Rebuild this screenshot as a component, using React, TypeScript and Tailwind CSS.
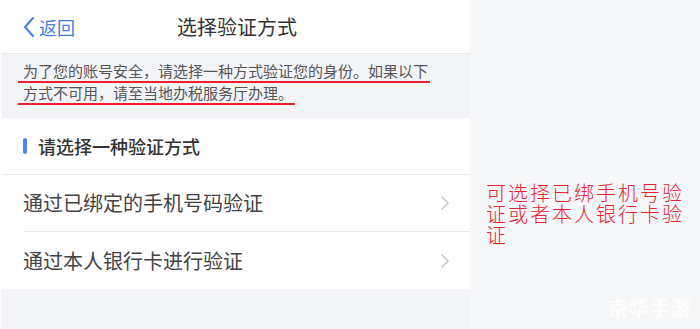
import React from "react";

const SANS = "font-['Noto_Sans_CJK_SC',sans-serif]";

function Chevron() {
  return (
    <svg width="10" height="16" viewBox="0 0 10 16" fill="none">
      <path d="M2 2l6 6-6 6" stroke="#c4c6cc" strokeWidth="1.6" strokeLinecap="round" strokeLinejoin="round" />
    </svg>
  );
}

function App() {
  return (
    <div className={`relative w-[700px] h-[329px] overflow-hidden bg-[#f6f7f9] flex ${SANS}`}>
      {/** phone screen */}
      <div className="w-[470px] h-full border-l-2 border-white bg-[#f3f4f8] flex flex-col">
        {/** nav bar */}
        <div className="h-[54px] shrink-0 bg-white border-b border-[#e6e7eb] flex items-center relative">
          <div className="absolute left-[20px] flex items-center gap-[3px] text-[#3f7fe8]">
            <svg width="14" height="22" viewBox="0 0 14 22" fill="none">
              <path d="M11 2L3 11l8 9" stroke="#3f7fe8" strokeWidth="2" strokeLinecap="round" strokeLinejoin="round" />
            </svg>
            <span className="text-[18px] leading-none">返回</span>
          </div>
          <h1 className="w-full text-center text-[20px] leading-none text-[#333] pl-[2px]">选择验证方式</h1>
        </div>

        {/** tip */}
        <div className="h-[64px] shrink-0 px-[21px] pt-[7px] text-[15px] leading-[22px] text-[#555]">
          <p className="w-fit border-b-2 border-[#e8232f] pr-[2px] -ml-[5px] pl-[5px] leading-[20px]">为了您的账号安全，请选择一种方式验证您的身份。如果以下</p>
          <p className="w-fit border-b-2 border-[#e8232f] pr-[2px] -ml-[5px] pl-[5px] leading-[20px]">方式不可用，请至当地办税服务厅办理。</p>
        </div>

        {/** options */}
        <div className="bg-white shrink-0">
          <div className="h-[57px] flex items-center gap-[11px] pl-[21px] border-b border-[#e8e9ec]">
            <span className="w-[4px] h-[16px] rounded-full bg-[#4f86f5]" />
            <span className="text-[18px] font-medium text-[#333]">请选择一种验证方式</span>
          </div>
          <div className="ml-[21px] h-[57px] flex items-center justify-between pr-[20px] border-b border-[#e8e9ec]">
            <span className="text-[20px] text-[#444]">通过已绑定的手机号码验证</span>
            <Chevron />
          </div>
          <div className="ml-[21px] h-[57px] flex items-center justify-between pr-[20px]">
            <span className="text-[20px] text-[#444]">通过本人银行卡进行验证</span>
            <Chevron />
          </div>
        </div>
      </div>

      {/** annotation */}
      <div className="flex-1 pl-[16px] pt-[182px]">
        <p className="w-[210px] text-[20px] leading-[21px] tracking-[2px] text-[#e8232f] font-light">
          可选择已绑手机号验证或者本人银行卡验证
        </p>
      </div>

      {/** watermark */}
      <span className="absolute right-[8px] bottom-[6px] text-[20px] font-bold text-white/80 tracking-[1px]">京华手游</span>
    </div>
  );
}

export default App;
